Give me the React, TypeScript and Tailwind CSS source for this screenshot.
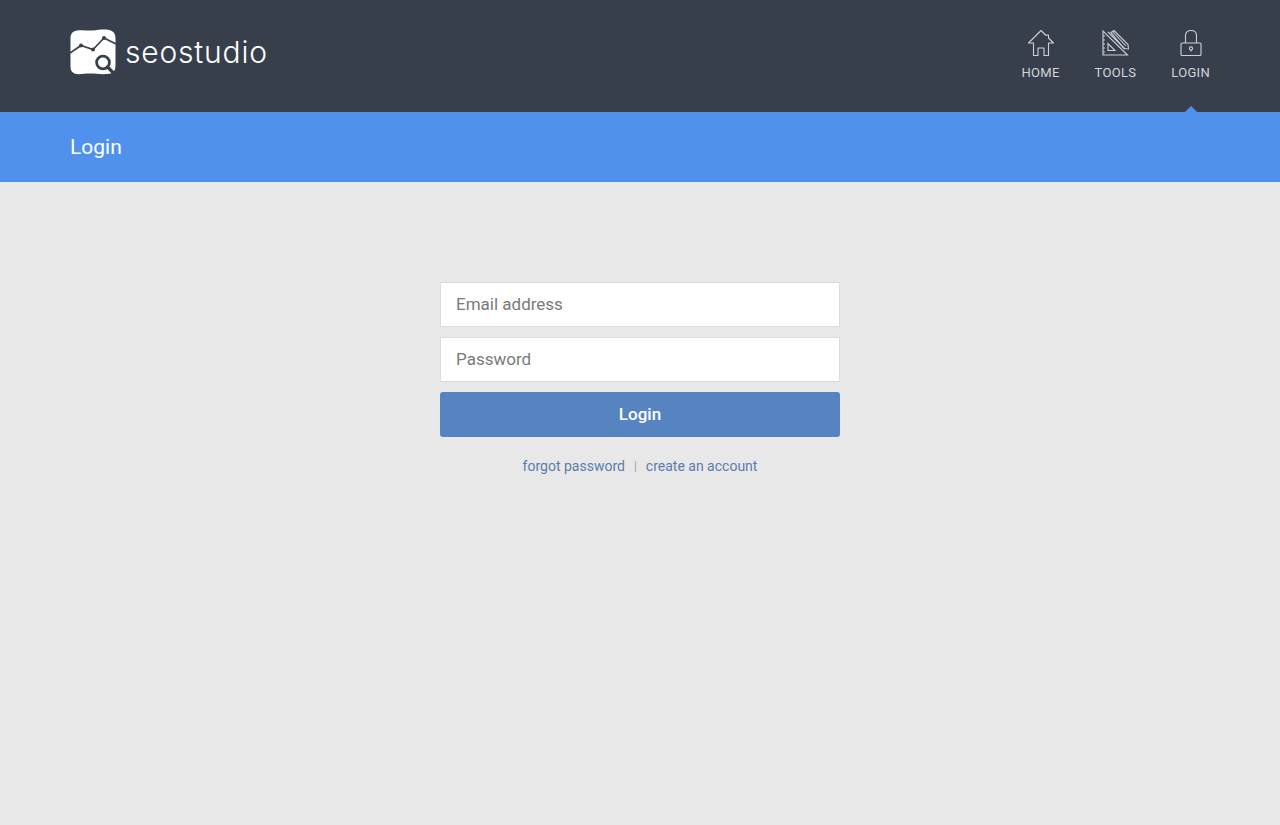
import React from "react";

function Logo() {
    return (
        <svg width="46" height="46" viewBox="0 0 46 46" className="block">
            <path d="M7 1.5 C13 0.5 18 2 23 1.5 C28 1 34 0 39 1 C44 2 45.5 5 45.5 10 V36 C45.5 42 43 45 37 45 C30 45.5 26 44.5 20 44.5 C14 44.5 8 46 4.5 44.5 C1 43 0.5 40 0.5 36 V10 C0.5 5 2 2.5 7 1.5 Z" fill="#fff" />
            <path d="M0 24 L11 16.5 L23 20.5 L34 9 L46 15" fill="none" stroke="#383f4c" strokeWidth="1.6" />
            <circle cx="11" cy="16.5" r="2" fill="#383f4c" />
            <circle cx="23" cy="20.5" r="2" fill="#383f4c" />
            <circle cx="34" cy="9" r="2" fill="#383f4c" />
            <circle cx="33" cy="33.5" r="6.4" fill="none" stroke="#383f4c" strokeWidth="2.8" />
            <path d="M37.5 38 L43 43.5" stroke="#383f4c" strokeWidth="3.2" strokeLinecap="round" />
        </svg>
    );
}

function HomeIcon() {
    return (
        <svg width="28" height="28" viewBox="0 0 28 28" fill="none" stroke="#cdd0d6" strokeWidth="1.1">
            <path d="M14 1.5 L1.5 14 H6.5 V26.5 H11 V19 H17 V26.5 H21.5 V14 H26.5 L21.5 9 V6 H19 V6.5 Z" strokeLinejoin="round" />
        </svg>
    );
}

function ToolsIcon() {
    return (
        <svg width="28" height="28" viewBox="0 0 28 28" fill="none" stroke="#cdd0d6" strokeWidth="1.1">
            <path d="M2 2 V26 H26.5 Z" />
            <path d="M7 14.5 V21.5 H14 Z" />
            <path d="M2 7 H4 M2 11 H4 M2 15 H4 M2 19 H4 M2 23 H4" />
            <path d="M10 3.5 L13 1.5 L27 15.5 L27.5 20 L23 19.5 Z" />
            <path d="M11.5 2.5 L25 17 M7 3 L24 20" />
        </svg>
    );
}

function LockIcon() {
    return (
        <svg width="24" height="28" viewBox="0 0 24 28" fill="none" stroke="#cdd0d6" strokeWidth="1.1">
            <rect x="2" y="14" width="20" height="12.5" rx="1" />
            <path d="M6.5 14 V6.5 C6.5 3 9 1.5 12 1.5 C15 1.5 17.5 3 17.5 6.5 V14" />
            <circle cx="12" cy="19.5" r="1.6" />
            <path d="M12 21 V22.5" />
        </svg>
    );
}

const navItems = [
    { label: "HOME", icon: <HomeIcon /> },
    { label: "TOOLS", icon: <ToolsIcon /> },
    { label: "LOGIN", icon: <LockIcon /> },
];

export default function App() {
    return (
        <div className="min-h-[825px] bg-[#e8e8e8] font-['Roboto',sans-serif]">
            <header className="h-[112px] bg-[#383f4c] flex items-center justify-between px-[70px]">
                <div className="flex items-center gap-[9px] -mt-[8px]">
                    <Logo />
                    <span className="font-['Inter',sans-serif] font-light text-[30px] tracking-[0.8px] leading-none text-white">seostudio</span>
                </div>
                <nav className="flex gap-[35px] h-full pt-[29px]">
                    {navItems.map((item) => (
                        <a key={item.label} className="relative flex flex-col items-center">
                            <span className="h-[28px] flex items-center justify-center">{item.icon}</span>
                            <span className="mt-[8px] text-[13px] leading-[16px] tracking-[0.3px] text-[#d2d4d9]">{item.label}</span>
                            {item.label === "LOGIN" && (
                                <span className="absolute left-1/2 -translate-x-1/2 top-[77px] w-0 h-0 border-x-[6px] border-x-transparent border-b-[6px] border-b-[#5091ee]" />
                            )}
                        </a>
                    ))}
                </nav>
            </header>
            <div className="h-[70px] bg-[#5091ee] flex items-center pl-[70px]">
                <h1 className="text-[21px] text-white leading-none">Login</h1>
            </div>
            <main className="flex justify-center pt-[100px]">
                <form className="w-[400px] flex flex-col">
                    <input
                        placeholder="Email address"
                        className="h-[45px] bg-white border border-[#dcdcdc] px-[15px] pb-[2px] text-[17px] outline-none placeholder:text-[#7a7a7a]"
                    />
                    <input
                        type="password"
                        placeholder="Password"
                        className="mt-[10px] h-[45px] bg-white border border-[#dcdcdc] px-[15px] pb-[2px] text-[17px] outline-none placeholder:text-[#7a7a7a]"
                    />
                    <button type="button" className="mt-[10px] h-[45px] bg-[#5584c1] rounded-[3px] text-white text-[17px] font-medium">
                        Login
                    </button>
                    <div className="mt-[21px] flex justify-center items-center text-[14px] leading-[16px] text-[#5b7cae]">
                        <a>forgot password</a>
                        <span className="mx-[9px] text-[#a0a4aa] text-[12px]">|</span>
                        <a>create an account</a>
                    </div>
                </form>
            </main>
        </div>
    );
}
